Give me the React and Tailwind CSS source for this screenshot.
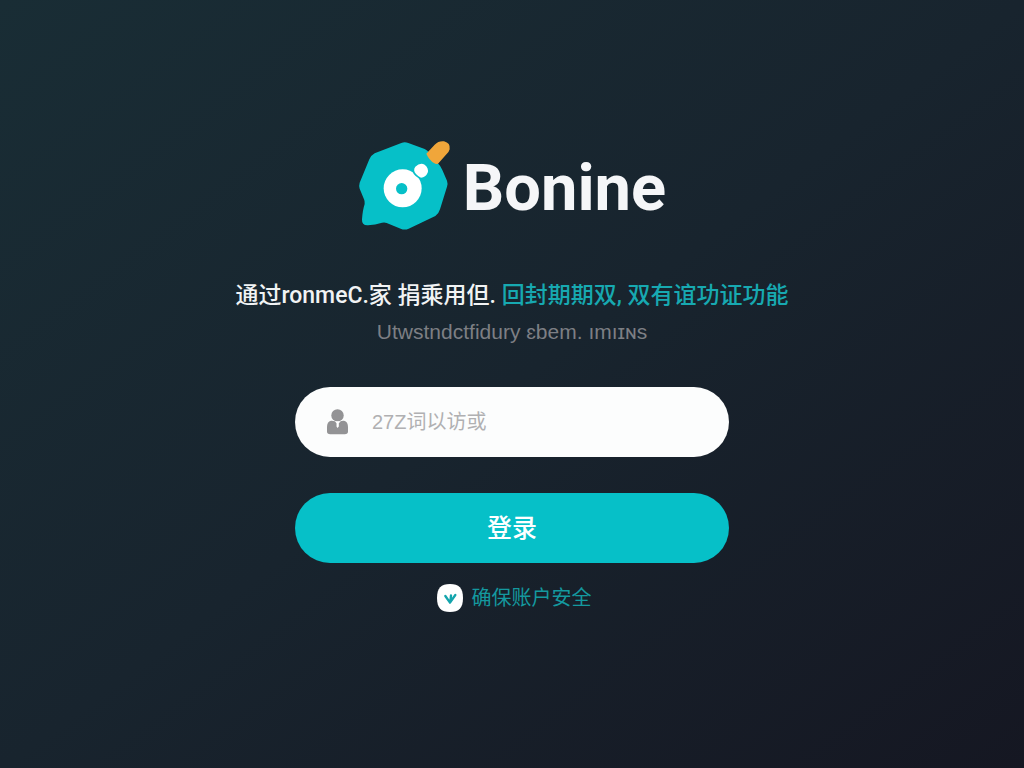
import React, { useState } from 'react';

const Logo = () => (
    <svg viewBox="36 30 279 273" className="w-[93px] h-[91px] shrink-0" aria-hidden="true">
        <path
            d="M166 39 Q176 35 187 39 L236 57 Q243 60 250 68 L273 97 Q284 108 289 120 L303 152 Q306 160 303 170 L282 238 Q278 252 268 258 L188 296 Q176 301 164 296 L122 279 Q116 276 108 278 Q88 284 66 286 Q47 287 48 268 Q50 240 56 222 Q57 214 54 208 L41 176 Q38 168 41 158 L70 88 Q75 76 86 70 Z"
            fill="#06c0c8"
        />
        <path d="M241 71 L266 44 Q278 32 294 34 Q314 39 311 58 Q309 66 302 72 L276 101 Q270 104 264 99 Q250 91 241 71 Z" fill="#f0a63a" />
        <circle cx="170" cy="175" r="57" fill="#fff" />
        <circle cx="167" cy="176" r="17" fill="#06c0c8" />
        <path d="M202 122 Q208 140 232 146" fill="none" stroke="#06c0c8" strokeWidth="7" />
        <path d="M208 110 Q222 97 236 104 Q249 114 245 128 Q239 142 225 143 Q218 141 210 132 Q200 121 208 110 Z" fill="#fff" />
    </svg>
);

const UserIcon = () => (
    <svg viewBox="0 0 64 78" className="w-[21px] h-[26px] shrink-0" aria-hidden="true">
        <circle cx="32" cy="19" r="19" fill="#939395" />
        <path d="M12 35 Q22 34 32 40 Q42 34 52 35 Q64 38 64 54 V68 Q64 76 54 76 H10 Q0 76 0 68 V54 Q0 38 12 35 Z" fill="#939395" />
        <path d="M24 37 H42 L36 43 V53 L32 57 L29 53 V43 Z" fill="#fff" />
    </svg>
);

const ShieldIcon = () => (
    <svg viewBox="0 0 78 84" className="w-[26px] h-[28px] shrink-0" aria-hidden="true">
        <path d="M39 0 C66 0 78 12 78 42 C78 72 66 84 39 84 C12 84 0 72 0 42 C0 12 12 0 39 0 Z" fill="#fff" />
        <path d="M25 36 L39 56 L55 33 M42 34 L40 54" fill="none" stroke="#14a5ad" strokeWidth="7" strokeLinecap="round" strokeLinejoin="round" />
    </svg>
);

const App = () => {
    const [account, setAccount] = useState('');

    function handleSubmit(e) {
        e.preventDefault();
    }

    return (
        <main className="flex min-h-screen flex-col items-center bg-linear-to-br from-[#192d35] via-[#18242e] to-[#151722] px-6 pt-[140px] pb-12 font-['Liberation_Sans','Noto_Sans_CJK_SC',sans-serif]">
            <header className="flex flex-col items-center text-center">
                <div className="flex items-center gap-3">
                    <Logo />
                    <h1 className="pt-1 font-[Roboto,sans-serif] text-[65px] leading-[86px] font-bold text-[#f5f6f8]">Bonine</h1>
                </div>
                <p className="mt-[49px] text-[23px] leading-[32px] font-medium text-[#f1f3f4] font-[Roboto,'Noto_Sans_CJK_SC',sans-serif]">
                    通过ronmeC.家 捐乘用但. <span className="text-[#17a9b1]">回封期期双, 双有谊功证功能</span>
                </p>
                <p className="mt-1.5 text-[21px] leading-[28px] text-[#7d7f84]">Utwstndctfidury ɛbem. ımıɪɴs</p>
            </header>

            <form onSubmit={handleSubmit} className="mt-[41px] flex w-full max-w-[434px] flex-col gap-9">
                <label className="flex h-[70px] items-center gap-6 rounded-full bg-[#fcfdfd] px-8">
                    <UserIcon />
                    <input
                        type="text"
                        aria-label="账号"
                        value={account}
                        onChange={(e) => setAccount(e.target.value)}
                        placeholder="27Z词以访或"
                        className="min-w-0 flex-1 bg-transparent text-[20px] leading-[28px] text-[#333] outline-none placeholder:text-[#b0b0b2]"
                    />
                </label>
                <button type="submit" className="h-[70px] rounded-full bg-[#06c0c8] pb-1 text-[25px] leading-[36px] font-medium text-white font-['Noto_Sans_CJK_SC',sans-serif]">
                    登录
                </button>
            </form>

            <a href="#security" className="mt-[21px] flex items-center gap-[9px] pl-1 text-[20px] leading-[28px] text-[#14999f]">
                <ShieldIcon />
                确保账户安全
            </a>
        </main>
    );
};

export default App;
